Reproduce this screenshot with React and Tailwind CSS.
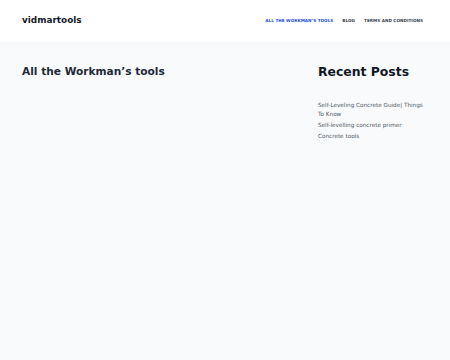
export default function App() {
  const posts = [
    'Self-Leveling Concrete Guide| Things To Know',
    'Self-levelling concrete primer',
    'Concrete tools',
  ];

  return (
    <div className="min-h-[360px] bg-[#f9fafb] text-[#1f2937]" style={{ fontFamily: '"DejaVu Sans", sans-serif' }}>
      {/* Header */}
      <header className="bg-white h-[42px] pl-[22px] pr-[27px] flex items-center justify-between">
        <span className="text-[8.9px] font-bold text-[#111827]">vidmartools</span>
        <nav className="flex items-center gap-[9px] text-[4.2px] font-bold uppercase">
          <span className="text-[#1d4ed8]">All the Workman’s tools</span>
          <span className="text-[#374151]">Blog</span>
          <span className="text-[#374151]">Terms and Conditions</span>
        </nav>
      </header>

      {/* Body */}
      <main className="flex justify-between px-[22px] pt-[22px]">
        <h1 className="text-[10.6px] font-bold text-[#1f2937] leading-[14px]">All the Workman’s tools</h1>
        <aside className="w-[110px]">
          <h2 className="text-[12.4px] font-bold text-[#111827] leading-[18px] mt-[-1px]">Recent Posts</h2>
          <ul className="mt-[19.5px] text-[5.7px] text-[#4b5563] leading-[9.5px] space-y-[1.5px]">
            {posts.map((p) => (
              <li key={p}>{p}</li>
            ))}
          </ul>
        </aside>
      </main>
    </div>
  );
}
